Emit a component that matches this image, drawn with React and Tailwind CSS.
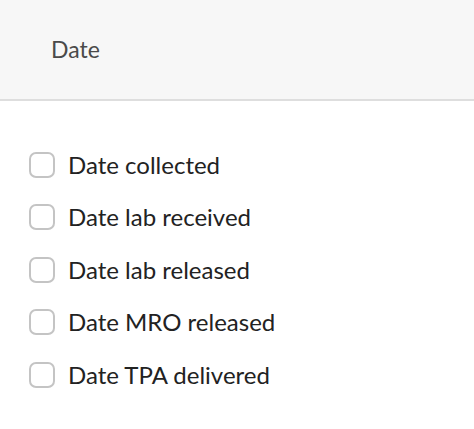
import React from "react";

const items = [
  "Date collected",
  "Date lab received",
  "Date lab released",
  "Date MRO released",
  "Date TPA delivered",
];

export default function App() {
  return (
    <div className="w-[474px] h-[429px] bg-white" style={{ fontFamily: "Lato, 'Open Sans', sans-serif" }}>
      <div className="h-[101px] bg-[#f7f7f7] border-b-2 border-[#dedede] flex items-center pl-[51px]">
        <span className="text-[23px] text-[#4a4a4a] leading-none">Date</span>
      </div>
      <div className="pt-[40px] flex flex-col">
        {items.map((t) => (
          <label key={t} className="h-[52.4px] flex items-start pl-[29px] gap-[13px]">
            <span className="mt-[11px] w-[26px] h-[26px] rounded-[7px] border-2 border-[#c4c4c4] bg-white shrink-0" />
            <span className="text-[24px] text-[#222] leading-[30px] mt-[9px]">{t}</span>
          </label>
        ))}
      </div>
    </div>
  );
}
